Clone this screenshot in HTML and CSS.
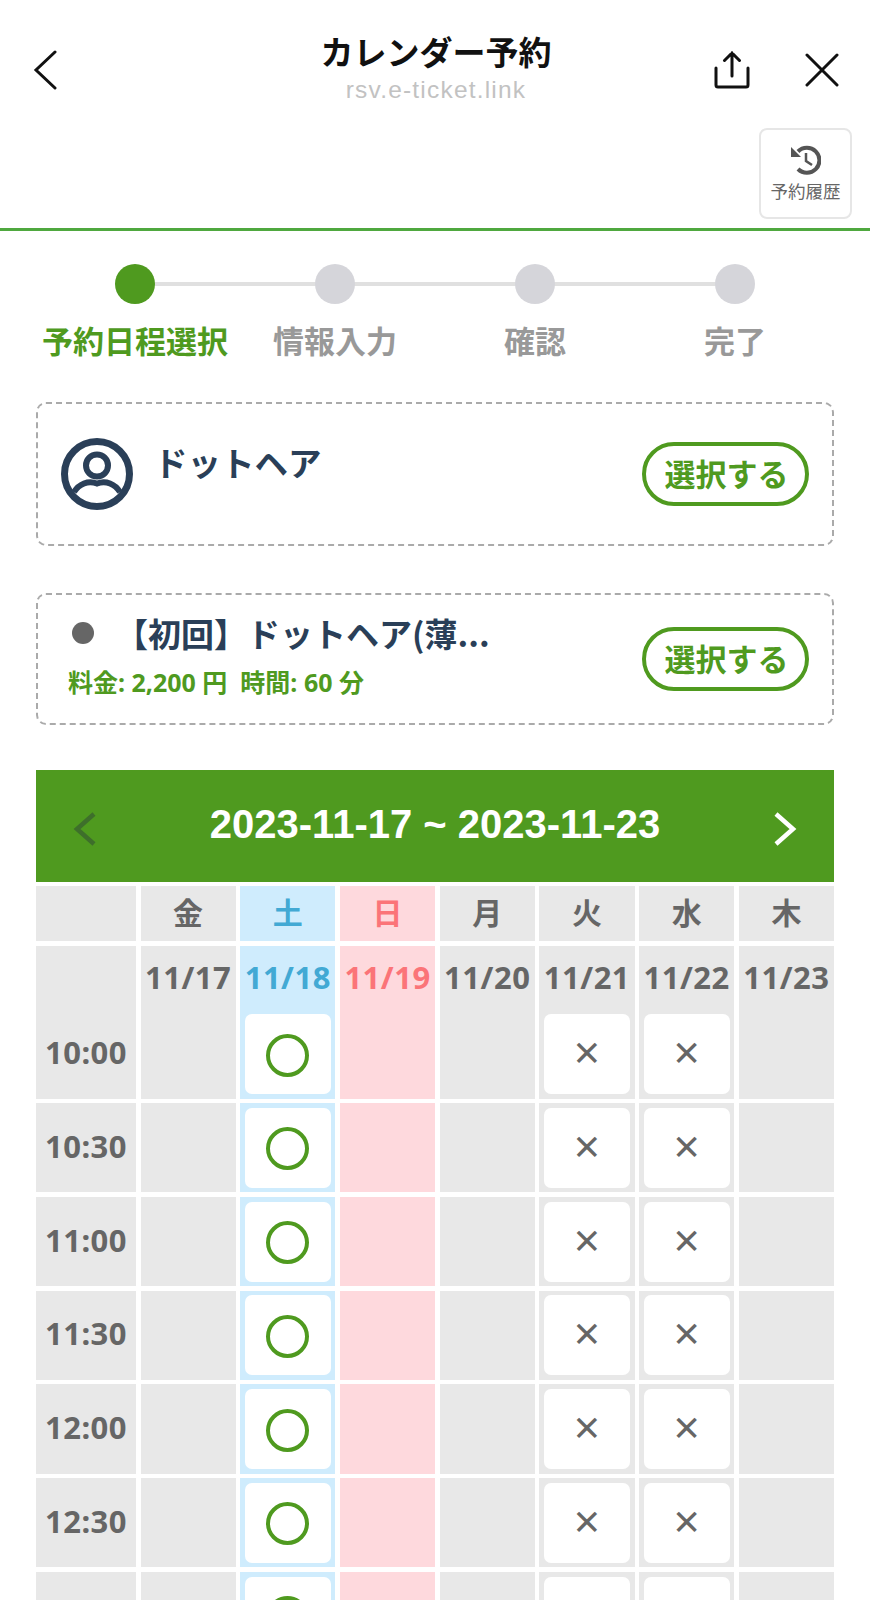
FILE: index.html
```html
<!DOCTYPE html>
<html lang="ja">
<head>
<meta charset="utf-8">
<title>カレンダー予約</title>
<link rel="stylesheet" href="styles.css">
</head>
<body>
<header class="nav">
  <svg class="nav-back" viewBox="0 0 24 40" width="24" height="40"><path d="M22 2 3 20l19 18" /></svg>
  <div class="nav-title">
    <div class="nav-name">カレンダー予約</div>
    <div class="nav-url">rsv.e-ticket.link</div>
  </div>
  <div class="nav-actions">
    <svg class="nav-icon" viewBox="0 0 36 38" width="36" height="38"><path d="M18 25V2M10.500 9.500 18 2l7.500 7.500M2 17v17q0 2 2 2h28q2 0 2-2V17"/></svg>
    <svg class="nav-icon nav-close" viewBox="0 0 34 34" width="34" height="34"><path d="M2 2l30 30M32 2 2 32"/></svg>
  </div>
</header>
<div class="toolbar">
  <button class="history">
    <svg class="history-icon" viewBox="0 0 30 30" width="30" height="30"><path class="history-ring" d="M7 6.500A12.500 12.500 0 1 1 7 24"/><path class="history-hands" d="M15 8v8l6 4"/><path class="history-tip" d="M0 2v10h10z"/></svg>
    <span>予約履歴</span>
  </button>
</div>
<ol class="steps">
  <li class="step step-active"><span class="step-dot"></span><span class="step-label">予約日程選択</span></li>
  <li class="step"><span class="step-dot"></span><span class="step-label">情報入力</span></li>
  <li class="step"><span class="step-dot"></span><span class="step-label">確認</span></li>
  <li class="step"><span class="step-dot"></span><span class="step-label">完了</span></li>
</ol>
<section class="card card-staff">
  <svg class="avatar" viewBox="0 0 72 72" width="72" height="72"><circle class="avatar-ring" cx="36" cy="36" r="32.500"/><circle cx="36" cy="27.500" r="11"/><path d="M13 54C18 46 27 42 36 45.500 45 42 54 46 59 54"/></svg>
  <div class="staff-name">ドットヘア</div>
  <button class="pick"><span>選択する</span></button>
</section>
<section class="card card-menu">
  <div class="menu-info">
    <div class="menu-title"><span class="menu-dot"></span><span>【初回】ドットヘア(薄...</span></div>
    <div class="menu-sub">料金: 2,200 円&nbsp;&nbsp;時間: 60 分</div>
  </div>
  <button class="pick"><span>選択する</span></button>
</section>
<div class="week">
  <svg class="week-arrow week-prev" viewBox="0 0 24 34" width="24" height="34"><path d="M21 2 4 17l17 15"/></svg>
  <div class="week-range">2023-11-17 ~ 2023-11-23</div>
  <svg class="week-arrow week-next" viewBox="0 0 24 34" width="24" height="34"><path d="M3 2l17 15L3 32"/></svg>
</div>
<div class="cal">
  <div class="c"></div><div class="c wd">金</div><div class="c wd sat">土</div><div class="c wd sun">日</div><div class="c wd">月</div><div class="c wd">火</div><div class="c wd">水</div><div class="c wd">木</div>

  <div class="c time"><span>10:00</span></div>
  <div class="c"><div class="date">11/17</div></div>
  <div class="c sat"><div class="date">11/18</div><div class="slot"><i class="ok"></i></div></div>
  <div class="c sun"><div class="date">11/19</div></div>
  <div class="c"><div class="date">11/20</div></div>
  <div class="c"><div class="date">11/21</div><div class="slot ng"><span>×</span></div></div>
  <div class="c"><div class="date">11/22</div><div class="slot ng"><span>×</span></div></div>
  <div class="c"><div class="date">11/23</div></div>

  <div class="c time"><span>10:30</span></div><div class="c"></div><div class="c sat"><div class="slot"><i class="ok"></i></div></div><div class="c sun"></div><div class="c"></div><div class="c"><div class="slot ng"><span>×</span></div></div><div class="c"><div class="slot ng"><span>×</span></div></div><div class="c"></div>
  <div class="c time"><span>11:00</span></div><div class="c"></div><div class="c sat"><div class="slot"><i class="ok"></i></div></div><div class="c sun"></div><div class="c"></div><div class="c"><div class="slot ng"><span>×</span></div></div><div class="c"><div class="slot ng"><span>×</span></div></div><div class="c"></div>
  <div class="c time"><span>11:30</span></div><div class="c"></div><div class="c sat"><div class="slot"><i class="ok"></i></div></div><div class="c sun"></div><div class="c"></div><div class="c"><div class="slot ng"><span>×</span></div></div><div class="c"><div class="slot ng"><span>×</span></div></div><div class="c"></div>
  <div class="c time"><span>12:00</span></div><div class="c"></div><div class="c sat"><div class="slot"><i class="ok"></i></div></div><div class="c sun"></div><div class="c"></div><div class="c"><div class="slot ng"><span>×</span></div></div><div class="c"><div class="slot ng"><span>×</span></div></div><div class="c"></div>
  <div class="c time"><span>12:30</span></div><div class="c"></div><div class="c sat"><div class="slot"><i class="ok"></i></div></div><div class="c sun"></div><div class="c"></div><div class="c"><div class="slot ng"><span>×</span></div></div><div class="c"><div class="slot ng"><span>×</span></div></div><div class="c"></div>
  <div class="c"></div><div class="c"></div><div class="c sat"><div class="slot"><i class="ok"></i></div></div><div class="c sun"></div><div class="c"></div><div class="c"><div class="slot"></div></div><div class="c"><div class="slot"></div></div><div class="c"></div>
</div>
</body>
</html>
```
FILE: styles.css
```css
html { overflow: hidden; height: 1600px; }
body {
  margin: 0;
  background: #fff;
  font-family: "Noto Sans CJK JP", "Noto Sans", sans-serif;
  height: 1600px;
  overflow: hidden;
}

/* nav */
.nav {
  display: grid;
  grid-template-columns: 1fr auto 1fr;
  align-items: start;
  height: 128px;
  padding: 0 31px 0 33px;
  box-sizing: border-box;
}
.nav svg { fill: none; stroke: #111; stroke-linecap: round; }
.nav-back { margin-top: 50px; stroke-width: 3; }
.nav-title { text-align: center; padding-top: 29px; }
.nav-name { font-size: 33px; font-weight: 700; line-height: 44px; color: #111; }
.nav-url {
  font-family: "Liberation Sans", sans-serif;
  font-size: 24.500px;
  letter-spacing: 1.200px;
  line-height: 28px;
  color: #c2c2c2;
  margin-top: 3px;
}
.nav-actions { display: flex; justify-content: flex-end; align-items: flex-start; gap: 55px; padding-top: 51px; }
.nav-icon { stroke-width: 3; }
.nav-close { margin-top: 2px; }

/* toolbar */
.toolbar {
  display: flex;
  justify-content: flex-end;
  height: 100px;
  padding-right: 18px;
  border-bottom: 3px solid #4fa83f;
}
.history {
  width: 93px;
  height: 91px;
  padding: 15px 0 0;
  box-sizing: border-box;
  border: 2px solid #e6e6e6;
  border-radius: 8px;
  background: #fff;
  color: #666;
  font-family: inherit;
  font-size: 17.500px;
  line-height: 24px;
  display: flex;
  flex-direction: column;
  align-items: center;
}
.history-icon { margin-bottom: 4px; fill: none; stroke: #555; }
.history-ring { stroke-width: 4; }
.history-hands { stroke-width: 2.500; }
.history-tip { fill: #555; stroke: none; }

/* steps */
.steps {
  list-style: none;
  display: grid;
  grid-template-columns: repeat(4, 200px);
  margin: 0;
  padding: 33px 0 0 35px;
}
.step { display: flex; flex-direction: column; align-items: center; position: relative; }
.step:not(:last-child)::after {
  content: "";
  position: absolute;
  left: 50%;
  top: 18px;
  width: 100%;
  height: 4px;
  background: #e0e0e0;
}
.step-dot { width: 40px; height: 40px; border-radius: 50%; background: #d5d5da; position: relative; z-index: 1; }
.step-label {
  font-size: 31px;
  font-weight: 700;
  line-height: 40px;
  margin-top: 16px;
  color: #999;
  white-space: nowrap;
}
.step-active .step-dot { background: #4f9a1f; }
.step-active .step-label { color: #4f9a1f; }

/* cards */
.card {
  display: flex;
  align-items: center;
  margin: 0 36px;
  box-sizing: border-box;
  border: 2px dashed #aaa;
  border-radius: 10px;
  padding-right: 23px;
}
.card-staff { height: 144px; margin-top: 42px; padding-left: 23px; }
.card-menu { height: 132px; margin-top: 47px; padding-left: 30px; }
.avatar { fill: none; stroke: #2a3f58; stroke-width: 6; flex: none; }
.avatar-ring { stroke-width: 7; }
.staff-name {
  flex: 1;
  align-self: flex-start;
  margin: 35px 0 0 21px;
  font-size: 33.500px;
  font-weight: 700;
  line-height: 46px;
  color: #2a3f58;
}
.pick {
  flex: none;
  width: 167px;
  height: 64px;
  padding: 0 0 3px 2px;
  box-sizing: border-box;
  border: 4.500px solid #4f9a1f;
  border-radius: 32px;
  background: #fff;
  color: #4f9a1f;
  font-family: inherit;
  font-size: 31px;
  font-weight: 700;
  line-height: 1;
}
.menu-info { flex: 1; min-width: 0; padding-bottom: 11px; }
.menu-title {
  display: flex;
  align-items: center;
  gap: 21px;
  font-size: 33px;
  font-weight: 700;
  line-height: 46px;
  color: #2a3f58;
  white-space: nowrap;
}
.menu-dot { width: 22px; height: 22px; margin-left: 4px; border-radius: 50%; background: #666; flex: none; }
.menu-sub {
  margin-top: 11px;
  font-family: "Noto Sans", "Noto Sans CJK JP", sans-serif;
  font-size: 25px;
  font-weight: 700;
  line-height: 30px;
  color: #4f9a1f;
}

/* week */
.week {
  display: flex;
  align-items: center;
  justify-content: space-between;
  margin: 45px 36px 0;
  height: 112px;
  padding: 0 37px;
  box-sizing: border-box;
  background: #4f9a1f;
}
.week-range {
  font-family: "Liberation Sans", sans-serif;
  font-size: 40px;
  font-weight: 700;
  color: #fff;
  margin-bottom: 4px;
}
.week-arrow { fill: none; stroke-width: 4.500; margin-top: 6px; }
.week-prev { stroke: #3e6f2b; }
.week-next { stroke: #fff; }

/* calendar */
.cal {
  display: grid;
  grid-template-columns: 100px repeat(7, 1fr);
  grid-template-rows: 55px 153px;
  grid-auto-rows: 89.250px;
  gap: 4.500px;
  margin: 4px 36px 0;
  font-family: "Noto Sans", "Noto Sans CJK JP", sans-serif;
  font-weight: 700;
  color: #666;
}
.c { background: #e8e8e8; display: flex; flex-direction: column; min-width: 0; }
.c.sat { background: #cfecfd; color: #42a9d4; }
.c.sun { background: #fed9dd; color: #fb7478; }
.wd {
  align-items: center;
  justify-content: center;
  padding-bottom: 6px;
  box-sizing: border-box;
  font-family: "Noto Sans CJK JP", sans-serif;
  font-size: 30px;
  line-height: 1;
}
.date {
  height: 62px;
  line-height: 62px;
  font-size: 31px;
  letter-spacing: 0.500px;
  text-align: center;
  white-space: nowrap;
  flex: none;
}
.time { justify-content: flex-end; font-size: 31px; letter-spacing: 0.500px; }
.time span {
  height: 80px;
  margin-bottom: 4.500px;
  padding-bottom: 4px;
  box-sizing: border-box;
  display: flex;
  align-items: center;
  justify-content: center;
}
.slot {
  flex: none;
  height: 80px;
  margin: auto 4.500px 4.500px;
  border-radius: 7px;
  background: #fff;
  display: flex;
  align-items: center;
  justify-content: center;
}
.ok { width: 43px; height: 43px; margin-top: 2px; box-sizing: border-box; border: 4px solid #4f9a1f; border-radius: 50%; }
.ng {
  font-family: "Noto Sans", sans-serif;
  font-weight: 400;
  font-size: 46px;
  line-height: 1;
  color: #666;
}
.ng span { padding-bottom: 6px; }
```
